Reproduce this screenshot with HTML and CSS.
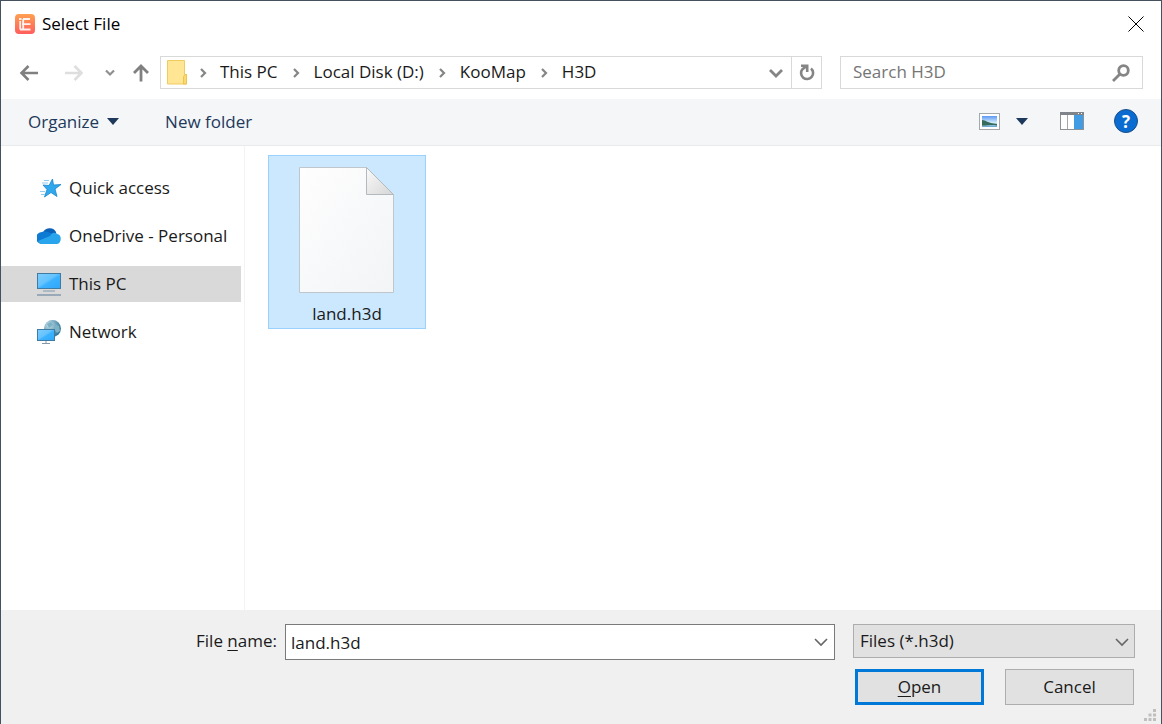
FILE: index.html
```html
<!DOCTYPE html>
<html lang="en">
<head>
    <meta charset="UTF-8">
    <meta name="viewport" content="width=device-width, initial-scale=1.0">
    <title>Select File</title>
    <link rel="stylesheet" href="styles.css">
</head>
<body>
    <div class="dialog">
        <header class="title-bar">
            <svg class="app-icon" width="20" height="20" viewBox="0 0 20 20">
                <defs>
                    <linearGradient id="appFill" x1="0" y1="0" x2="0" y2="1">
                        <stop offset="0" stop-color="#ffa050"/>
                        <stop offset="1" stop-color="#ff5d5d"/>
                    </linearGradient>
                </defs>
                <rect width="20" height="20" rx="4" fill="url(#appFill)"/>
                <path d="M4 5h2.500M8 5h7M5.200 7v8.500M5 15.500h10.500M7 10.200h8.500M8.200 5v10" fill="none" stroke="#fff" stroke-width="1.800" opacity="0.900"/>
            </svg>
            <h1 class="title">Select File</h1>
            <button class="close" aria-label="Close">
                <svg width="16" height="16" viewBox="0 0 16 16"><path d="M.5 .5l15 15M15.500 .5l-15 15" stroke="#000"/></svg>
            </button>
        </header>

        <nav class="nav-bar">
            <button class="nav-button back" aria-label="Back">
                <svg width="20" height="18" viewBox="0 0 20 18"><path d="M19 9H3M9.500 2L2.500 9l7 7" fill="none" stroke="#808080" stroke-width="2.600"/></svg>
            </button>
            <button class="nav-button forward" aria-label="Forward" disabled>
                <svg width="20" height="18" viewBox="0 0 20 18"><path d="M1 9h16M10.500 2l7 7-7 7" fill="none" stroke="#dedede" stroke-width="2.600"/></svg>
            </button>
            <button class="nav-button recent" aria-label="Recent locations">
                <svg width="10" height="8" viewBox="0 0 10 8"><path d="M1 1.500l4 4 4-4" fill="none" stroke="#8f8f8f" stroke-width="2.200"/></svg>
            </button>
            <button class="nav-button up" aria-label="Up">
                <svg width="18" height="18" viewBox="0 0 18 18"><path d="M9 17.500V2M2 9l7-7 7 7" fill="none" stroke="#808080" stroke-width="2.800"/></svg>
            </button>
            <div class="address">
                <svg class="folder" width="21" height="25" viewBox="0 0 21 25">
                    <path d="M.5 .5h17v14h2v9.500H.5z" fill="#ffe694" stroke="#f0cb60"/>
                    <path d="M16.500 24v-7.500l1.500-2h1.500V24z" fill="#fbd96f" stroke="#ecc450"/>
                </svg>
                <svg class="crumb-arrow" width="8" height="10" viewBox="0 0 8 10"><path d="M2 1l4 4-4 4" fill="none" stroke="#858585" stroke-width="2.200"/></svg>
                <a class="crumb" href="#">This PC</a>
                <svg class="crumb-arrow" width="8" height="10" viewBox="0 0 8 10"><path d="M2 1l4 4-4 4" fill="none" stroke="#858585" stroke-width="2.200"/></svg>
                <a class="crumb" href="#">Local Disk (D:)</a>
                <svg class="crumb-arrow" width="8" height="10" viewBox="0 0 8 10"><path d="M2 1l4 4-4 4" fill="none" stroke="#858585" stroke-width="2.200"/></svg>
                <a class="crumb" href="#">KooMap</a>
                <svg class="crumb-arrow" width="8" height="10" viewBox="0 0 8 10"><path d="M2 1l4 4-4 4" fill="none" stroke="#858585" stroke-width="2.200"/></svg>
                <a class="crumb" href="#">H3D</a>
                <button class="address-button history" aria-label="Previous locations">
                    <svg width="14" height="10" viewBox="0 0 14 10"><path d="M1 2l6 6 6-6" fill="none" stroke="#858585" stroke-width="2.800"/></svg>
                </button>
                <button class="address-button refresh" aria-label="Refresh">
                    <svg width="16" height="17" viewBox="0 0 16 17"><path d="M12 4.500A6 6 0 1 1 3.500 5.200L7 2.500M2 1.800h6.200V8" fill="none" stroke="#858585" stroke-width="2.600"/></svg>
                </button>
            </div>
            <div class="search">
                <input class="search-input" type="text" placeholder="Search H3D" aria-label="Search H3D">
                <svg width="18" height="18" viewBox="0 0 18 18"><circle cx="11.500" cy="6.500" r="4.800" fill="none" stroke="#858585" stroke-width="2.800"/><path d="M8 10L1 17" stroke="#858585" stroke-width="2.800"/></svg>
            </div>
        </nav>

        <div class="command-bar">
            <button class="command">Organize
                <svg width="12" height="7" viewBox="0 0 12 7"><path d="M0 0h12L6 7z" fill="#1e395b"/></svg>
            </button>
            <button class="command">New folder</button>
            <div class="view-tools">
                <button class="command" aria-label="Change your view">
                    <svg width="21" height="17" viewBox="0 0 21 17">
                        <defs>
                            <linearGradient id="sky" x1="0" y1="0" x2="0" y2="1">
                                <stop offset="0" stop-color="#5c98f4"/>
                                <stop offset="0.600" stop-color="#d2ebfb"/>
                                <stop offset="1" stop-color="#62a3c9"/>
                            </linearGradient>
                        </defs>
                        <rect x=".5" y=".5" width="20" height="16" fill="#fff" stroke="#a3a8ad"/>
                        <rect x="3" y="3" width="15" height="11" fill="url(#sky)"/>
                        <path d="M3 7c4 0 5 3 15 4v1.500c-5-1-9 0-15 0z" fill="#376b5c"/>
                    </svg>
                </button>
                <button class="command view-more" aria-label="More options">
                    <svg width="12" height="7" viewBox="0 0 12 7"><path d="M0 0h12L6 7z" fill="#1e395b"/></svg>
                </button>
                <button class="command preview" aria-label="Show the preview pane">
                    <svg width="24" height="18" viewBox="0 0 24 18">
                        <rect x=".5" y=".5" width="23" height="17" fill="#fff" stroke="#8d9297"/>
                        <path d="M0 0h24v3H0z" fill="#7e848a"/>
                        <path d="M18 1.500h1M21 1.500h1" stroke="#fff"/>
                        <path d="M7.500 3v14" stroke="#a3a8ad"/>
                        <path d="M14 3h9v14h-9z" fill="#429ce3"/>
                    </svg>
                </button>
                <button class="help" aria-label="Get help">?</button>
            </div>
        </div>

        <main class="content">
            <aside class="sidebar">
                <a class="place" href="#">
                    <svg width="24" height="24" viewBox="0 0 24 24">
                        <path d="M15.500 3l1 6 7.500-.5-6 4.500 2 7.500-6-4-6.500 4.500 2.500-7.500-4-4.500 6 .5z" fill="#2fa8ee" stroke="#1987cc" stroke-width="0.800"/>
                        <path d="M7 4.500h5M5 7h6M3 15.500h5M4 18.500h4" stroke="#90cdf1"/>
                    </svg>
                    Quick access
                </a>
                <a class="place" href="#">
                    <svg width="24" height="24" viewBox="0 0 24 24">
                        <path d="M6 9a6.800 6 0 0 1 13-1l1 7H9z" fill="#0c61b8"/>
                        <path d="M5 20a6 6 0 0 1 0-12c4-1 7 0 10 2l-1 9z" fill="#0d7ad3"/>
                        <path d="M5 20c-2 0-3-1-4-3l12-5c2-4 5-4 7-2 5 0 5 9 0 10z" fill="#28a5ec"/>
                    </svg>
                    OneDrive - Personal
                </a>
                <a class="place selected" href="#">
                    <svg width="24" height="24" viewBox="0 0 24 24">
                        <defs>
                            <linearGradient id="screen" x1="0" y1="0" x2="1" y2="1">
                                <stop offset="0" stop-color="#7fcefc"/>
                                <stop offset="0.450" stop-color="#65c3ff"/>
                                <stop offset="0.550" stop-color="#3cb2ff"/>
                                <stop offset="1" stop-color="#30a8f8"/>
                            </linearGradient>
                        </defs>
                        <rect x=".5" y="1.500" width="23" height="15" fill="url(#screen)" stroke="#3f7ba3"/>
                        <path d="M6 19h12" stroke="#8498a8"/>
                        <path d="M0 23h24" stroke="#8498ad" stroke-width="1.500"/>
                    </svg>
                    This PC
                </a>
                <a class="place" href="#">
                    <svg width="24" height="24" viewBox="0 0 24 24">
                        <defs>
                            <radialGradient id="globe" cx="0.300" cy="0.300" r="0.700">
                                <stop offset="0" stop-color="#c8e1ea"/>
                                <stop offset="1" stop-color="#367b9d"/>
                            </radialGradient>
                        </defs>
                        <circle cx="15.500" cy="8.500" r="8.500" fill="url(#globe)"/>
                        <path d="M10 4l4-2 2 3-4 3zM18 4l4 2 1 5-3 2-3-4z" fill="#7db2c5"/>
                        <rect x=".5" y="9.500" width="17" height="11" fill="url(#screen)" stroke="#3f7ba3"/>
                        <path d="M9 21v2M5 23.500h8" stroke="#8498a8"/>
                    </svg>
                    Network
                </a>
            </aside>
            <section class="files">
                <button class="file">
                    <svg width="96" height="127" viewBox="0 0 96 127">
                        <defs>
                            <linearGradient id="paper" x1="0" y1="0" x2="1" y2="1">
                                <stop offset="0" stop-color="#fefefe"/>
                                <stop offset="1" stop-color="#f2f4f6"/>
                            </linearGradient>
                            <linearGradient id="fold" x1="0" y1="0" x2="1" y2="1">
                                <stop offset="0" stop-color="#fafafa"/>
                                <stop offset="1" stop-color="#d6d6d6"/>
                            </linearGradient>
                        </defs>
                        <path d="M.5 .5h67l27 27v98H.5z" fill="url(#paper)" stroke="#bfc6cc"/>
                        <path d="M67.500 .5v27h27z" fill="url(#fold)" stroke="#b4b9bd"/>
                    </svg>
                    land.h3d
                </button>
            </section>
        </main>

        <footer class="footer">
            <div class="fields">
                <label class="file-label" for="fileName">File <u>n</u>ame:</label>
                <div class="combo">
                    <input class="file-name" id="fileName" type="text" value="land.h3d">
                    <button class="combo-button" aria-label="Show file names">
                        <svg width="14" height="9" viewBox="0 0 14 9"><path d="M1 1l6 6 6-6" fill="none" stroke="#666" stroke-width="1.600"/></svg>
                    </button>
                </div>
                <div class="file-type">
                    <select class="type-select" aria-label="Files of type">
                        <option>Files (*.h3d)</option>
                    </select>
                    <svg class="type-arrow" width="14" height="9" viewBox="0 0 14 9"><path d="M1 1l6 6 6-6" fill="none" stroke="#666" stroke-width="1.600"/></svg>
                </div>
            </div>
            <div class="actions">
                <button class="action default"><span><u>O</u>pen</span></button>
                <button class="action">Cancel</button>
            </div>
            <svg class="grip" width="12" height="12" viewBox="0 0 12 12">
                <path d="M9 0h3v3H9zM9 4.500h3v3H9zM4.500 4.500h3v3h-3zM9 9h3v3H9zM4.500 9h3v3h-3zM0 9h3v3H0z" fill="#bfbfbf"/>
            </svg>
        </footer>
    </div>
</body>
</html>
```
FILE: styles.css
```css
* {
    box-sizing: border-box;
}

body {
    margin: 0;
    font-family: "Open Sans", "Noto Sans", sans-serif;
    font-size: 17px;
    color: #1a1a1a;
}

button,
input,
select {
    font: inherit;
    color: inherit;
}

button {
    display: flex;
    align-items: center;
    justify-content: center;
    padding: 0;
    border: none;
    background: none;
}

a {
    color: inherit;
    text-decoration: none;
}

svg {
    display: block;
    flex-shrink: 0;
}

u {
    text-underline-offset: 3px;
}

.dialog {
    display: flex;
    flex-direction: column;
    min-height: 100vh;
    border: 1px solid #46515e;
    border-bottom: none;
    background-color: #fff;
}

/* Title bar */
.title-bar {
    display: flex;
    align-items: center;
    height: 45px;
    padding: 0 17px 0 14px;
}

.title {
    flex: 1;
    margin: 0 0 0 7px;
    font-size: 17px;
    font-weight: normal;
    color: #000;
}

/* Navigation */
.nav-bar {
    display: flex;
    align-items: center;
    padding: 10px 18px;
}

.forward {
    margin-left: 25px;
}

.recent {
    margin-left: 21px;
}

.up {
    margin: 0 10px 0 17px;
}

.address {
    display: flex;
    flex: 1;
    align-items: center;
    height: 33px;
    padding-left: 6px;
    border: 1px solid #d9d9d9;
}

.crumb {
    padding-bottom: 2px;
}

.crumb-arrow {
    margin: 0 14px;
}

.folder + .crumb-arrow {
    margin: 0 13px 0 11px;
}

.address-button {
    width: 30px;
    height: 31px;
}

.history {
    margin-left: auto;
}

.refresh {
    border-left: 1px solid #d9d9d9;
}

.search {
    display: flex;
    align-items: center;
    width: 303px;
    height: 33px;
    margin-left: 18px;
    padding: 0 12px;
    border: 1px solid #d9d9d9;
}

.search-input {
    flex: 1;
    min-width: 0;
    padding: 0 0 2px;
    border: none;
    outline: none;
}

.search-input::placeholder {
    color: #757575;
    opacity: 1;
}

/* Command bar */
.command-bar {
    display: flex;
    align-items: center;
    gap: 46px;
    height: 47px;
    padding: 0 23px 2px 27px;
    border-bottom: 1px solid #e8eaec;
    background-color: #f4f6f8;
    color: #1e395b;
}

.command {
    gap: 8px;
}

.view-tools {
    display: flex;
    align-items: center;
    margin-left: auto;
}

.view-more {
    margin-left: 16px;
}

.preview {
    margin: 0 30px 0 32px;
}

.help {
    width: 24px;
    height: 24px;
    border: 1px solid #1a4f8b;
    border-radius: 50%;
    background-color: #0a6cd0;
    color: #fff;
    font-weight: bold;
}

/* Places and files */
.content {
    display: flex;
    flex: 1;
}

.sidebar {
    display: flex;
    flex-direction: column;
    gap: 12px;
    width: 244px;
    padding: 24px 3px 24px 0;
    border-right: 1px solid #f3f3f3;
}

.place {
    display: flex;
    align-items: center;
    gap: 8px;
    height: 36px;
    padding: 0 0 1px 36px;
    white-space: nowrap;
}

.place.selected {
    background-color: #d9d9d9;
}

.files {
    flex: 1;
    padding: 9px 23px;
}

.file {
    flex-direction: column;
    gap: 8px;
    width: 158px;
    padding: 11px 0 3px;
    border: 1px solid #99d1ff;
    background-color: #cce8ff;
}

/* Footer */
.footer {
    position: relative;
    padding: 14px 26px 19px;
    background-color: #f0f0f0;
}

.fields {
    display: flex;
    align-items: flex-start;
    height: 36px;
}

.file-label {
    width: 258px;
    padding-right: 8px;
    line-height: 34px;
    text-align: right;
}

.combo {
    display: flex;
    flex: 1;
    height: 36px;
    border: 1px solid #7a7a7a;
    background-color: #fff;
}

.file-name {
    flex: 1;
    min-width: 0;
    padding: 0 5px;
    border: none;
    outline: none;
    background: none;
}

.combo-button {
    width: 26px;
}

.file-type {
    position: relative;
    width: 282px;
    margin-left: 18px;
}

.type-select {
    width: 100%;
    height: 34px;
    padding: 0 6px 1px;
    border: 1px solid #adadad;
    border-radius: 0;
    background-color: #e1e1e1;
    appearance: none;
}

.type-arrow {
    position: absolute;
    top: 14px;
    right: 6px;
    pointer-events: none;
}

.actions {
    display: flex;
    justify-content: flex-end;
    gap: 21px;
    margin-top: 9px;
    padding-right: 1px;
}

.action {
    width: 129px;
    height: 36px;
    padding-bottom: 2px;
    border: 1px solid #adadad;
    background-color: #e1e1e1;
}

.action.default {
    border: 3px solid #0078d7;
}

.grip {
    position: absolute;
    right: 5px;
    bottom: 3px;
}
```
